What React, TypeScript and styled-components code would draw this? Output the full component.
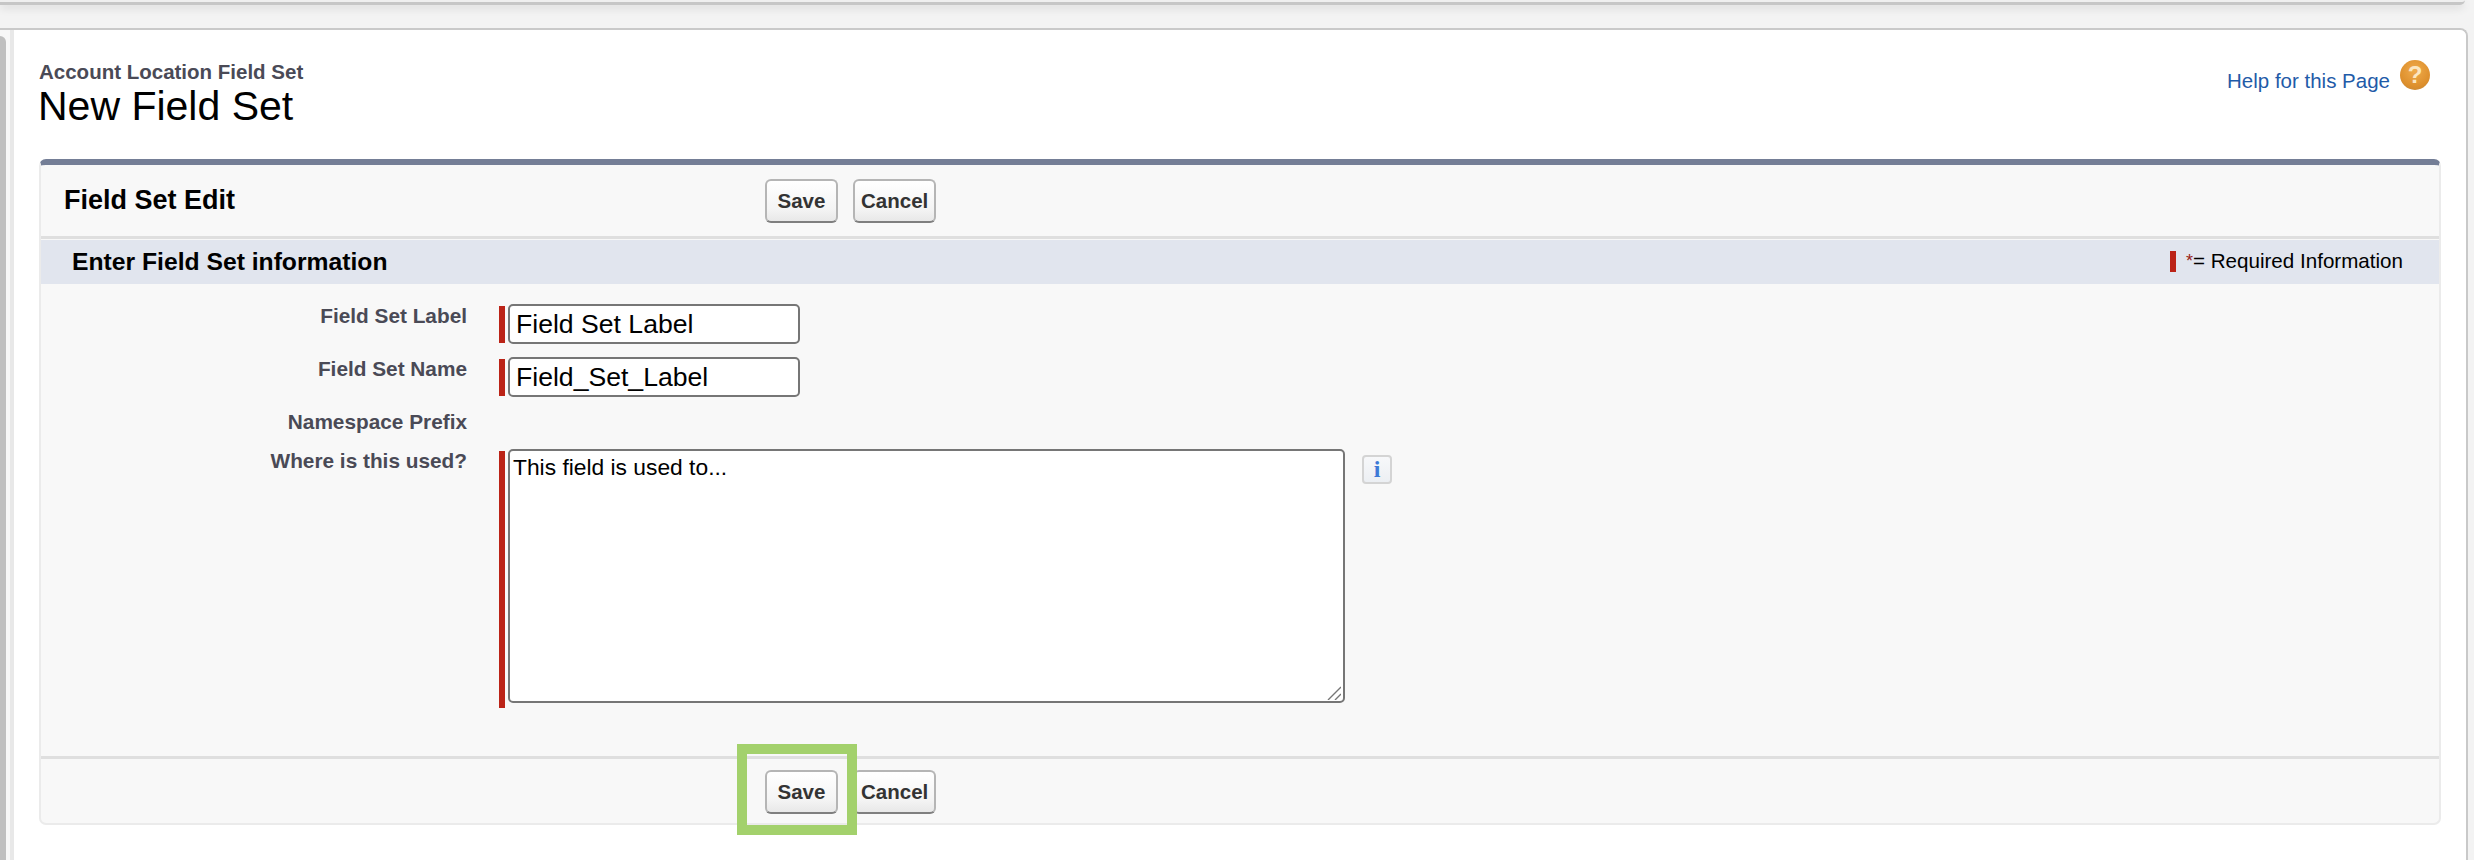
import React from 'react'
import styled, { createGlobalStyle } from 'styled-components'

const GlobalStyle = createGlobalStyle`
  html, body {
    margin: 0;
    padding: 0;
    background: #f3f3f3;
  }
  * {
    box-sizing: border-box;
  }
`

const ActionButtons = () => (
  <>
    <ActionBtn type="button">Save</ActionBtn>
    <ActionBtn type="button">Cancel</ActionBtn>
  </>
)

const App: React.FC = () => {
  return (
    <Page>
      <GlobalStyle />
      <TopBar />
      <ContentRow>
        <SideTab />
        <MainPanel>
          <PageHeader>
            <PageTitles>
              <PageType>Account Location Field Set</PageType>
              <PageName>New Field Set</PageName>
            </PageTitles>
            <HelpLink>
              <HelpText>Help for this Page</HelpText>
              <HelpIcon>?</HelpIcon>
            </HelpLink>
          </PageHeader>

          <Block>
            <BlockHeader>
              <BlockTitle>Field Set Edit</BlockTitle>
              <ActionButtons />
            </BlockHeader>

            <SectionBand>
              <SectionTitle>Enter Field Set information</SectionTitle>
              <RequiredLegend>
                <RequiredMark />
                <Star>*</Star>= Required Information
              </RequiredLegend>
            </SectionBand>

            <FormGrid>
              <FieldLabel>Field Set Label</FieldLabel>
              <FieldCell>
                <RequiredBar $height={37} />
                <TextInput type="text" defaultValue="Field Set Label" />
              </FieldCell>

              <FieldLabel>Field Set Name</FieldLabel>
              <FieldCell>
                <RequiredBar $height={37} />
                <TextInput type="text" defaultValue="Field_Set_Label" />
              </FieldCell>

              <FieldLabel>Namespace Prefix</FieldLabel>
              <EmptyCell />

              <FieldLabel>Where is this used?</FieldLabel>
              <FieldCell>
                <RequiredBar $height={257} />
                <TextareaWrap>
                  <Description defaultValue="This field is used to..." />
                  <ResizeGrip viewBox="0 0 14 14">
                    <path d="M1 14 L14 1 M8 14 L14 8" />
                  </ResizeGrip>
                </TextareaWrap>
                <InfoBtn type="button">i</InfoBtn>
              </FieldCell>
            </FormGrid>

            <BlockFooter>
              <ActionButtons />
              <Highlight />
            </BlockFooter>
          </Block>
        </MainPanel>
      </ContentRow>
    </Page>
  )
}

export default App

const Page = styled.div`
  width: 2474px;
  height: 860px;
  overflow: hidden;
  font-family: 'Liberation Sans', Arial, sans-serif;
`

const TopBar = styled.div`
  width: 2465px;
  height: 5px;
  background: #efefef;
  border-bottom: 3px solid #c6c6c6;
  border-bottom-right-radius: 6px;
  box-shadow: 0 3px 8px rgba(0, 0, 0, 0.12);
`

const ContentRow = styled.div`
  display: flex;
  width: 2468px;
  height: 832px;
  margin-top: 23px;
  background: #f7f7f7;
  border-top: 2px solid #c9c9c9;
  border-right: 2px solid #c9c9c9;
  border-top-right-radius: 8px;
`

const SideTab = styled.div`
  flex: none;
  width: 6px;
  margin-top: 6px;
  background: #bfbfbf;
  border-top-right-radius: 6px;
`

const MainPanel = styled.div`
  flex: none;
  width: 2456px;
  margin-left: 4px;
  padding: 0 25px;
  background: #ffffff;
  border-left: 4px solid #e8e8e8;
  border-top-right-radius: 6px;
`

const PageHeader = styled.div`
  display: flex;
  justify-content: space-between;
  height: 129px;
  padding-top: 30px;
`

const PageTitles = styled.div`
  display: flex;
  flex-direction: column;
`

const PageType = styled.span`
  font-size: 20.5px;
  line-height: 24px;
  font-weight: bold;
  color: #4a4a56;
`

const PageName = styled.span`
  margin-left: -1px;
  font-size: 41px;
  line-height: 44px;
  color: #000000;
`

const HelpLink = styled.div`
  display: flex;
  align-items: flex-start;
  gap: 10px;
  margin-right: 11px;
`

const HelpText = styled.span`
  margin-top: 9px;
  font-size: 20.5px;
  line-height: 24px;
  color: #1f5ba8;
`

const HelpIcon = styled.span`
  width: 30px;
  height: 30px;
  border-radius: 50%;
  background: radial-gradient(circle at 50% 35%, #f0ab4c, #dd8f2c 65%, #b8823c);
  color: #fbe6c0;
  font-size: 24px;
  line-height: 30px;
  font-weight: bold;
  text-align: center;
`

const Block = styled.div`
  position: relative;
  width: 2402px;
  height: 666px;
  background: #f8f8f8;
  border: 2px solid #ebebeb;
  border-top: 6px solid #747e96;
  border-radius: 7px;
`

const BlockHeader = styled.div`
  display: flex;
  align-items: center;
  gap: 15px;
  height: 74px;
  border-bottom: 3px solid #dfdfdf;
`

const BlockTitle = styled.h2`
  flex: none;
  width: 709px;
  margin: 0;
  padding-left: 23px;
  font-size: 27px;
  font-weight: bold;
  color: #000000;
`

const ActionBtn = styled.button`
  height: 44px;
  padding: 0 6px;
  min-width: 73px;
  font-family: inherit;
  font-size: 20.5px;
  font-weight: bold;
  color: #333333;
  background: linear-gradient(#ffffff, #f4f4f4 70%, #e8e8e8);
  border: 2px solid #b5b5b5;
  border-bottom-color: #7f7f7f;
  border-radius: 6px;
`

const SectionBand = styled.div`
  display: flex;
  align-items: center;
  justify-content: space-between;
  height: 44px;
  margin-top: 1px;
  padding: 0 36px 0 31px;
  background: #e1e5ee;
`

const SectionTitle = styled.h3`
  margin: 0;
  font-size: 24.7px;
  font-weight: bold;
  color: #000000;
`

const RequiredLegend = styled.div`
  display: flex;
  align-items: center;
  margin-top: -2px;
  font-size: 20.6px;
  color: #000000;
  white-space: pre;
`

const RequiredMark = styled.span`
  width: 6px;
  height: 21px;
  margin-right: 10px;
  background: #bb2317;
`

const Star = styled.span`
  color: #9a1f17;
  font-size: 18px;
`

const FormGrid = styled.div`
  display: grid;
  grid-template-columns: 426px 1fr;
  grid-template-rows: 40px 40px 26px auto;
  column-gap: 32px;
  row-gap: 13px;
  padding: 20px 0 48px;
`

const FieldLabel = styled.label`
  font-size: 20.8px;
  line-height: 24px;
  font-weight: bold;
  text-align: right;
  color: #4a4a56;
`

const FieldCell = styled.div`
  display: flex;
  align-items: flex-start;
`

const EmptyCell = styled.div``

const RequiredBar = styled.span<{ $height: number }>`
  flex: none;
  width: 6px;
  height: ${(p) => p.$height}px;
  margin: 2px 3px 0 0;
  background: #bb2317;
`

const TextInput = styled.input`
  width: 292px;
  height: 40px;
  padding: 0 6px;
  font-family: inherit;
  font-size: 26.6px;
  color: #000000;
  background: #ffffff;
  border: 2px solid #767676;
  border-radius: 5px;
  outline: none;
`

const TextareaWrap = styled.div`
  position: relative;
  flex: none;
  width: 837px;
  height: 254px;
`

const Description = styled.textarea`
  display: block;
  width: 100%;
  height: 100%;
  padding: 3px;
  font-family: inherit;
  font-size: 22.8px;
  color: #000000;
  background: #ffffff;
  border: 2px solid #767676;
  border-radius: 5px;
  outline: none;
  resize: none;
`

const ResizeGrip = styled.svg`
  position: absolute;
  right: 4px;
  bottom: 3px;
  width: 14px;
  height: 14px;
  fill: none;
  stroke: #767676;
  stroke-width: 1.4;
`

const InfoBtn = styled.button`
  flex: none;
  width: 30px;
  height: 29px;
  margin: 6px 0 0 17px;
  padding: 0;
  font-family: 'Liberation Serif', serif;
  font-size: 24px;
  font-weight: bold;
  line-height: 25px;
  color: #3d79d6;
  background: linear-gradient(#f7f8fa, #eceff3);
  border: 2px solid #d4d4d4;
  border-radius: 4px;
`

const BlockFooter = styled.div`
  display: flex;
  align-items: flex-start;
  gap: 15px;
  height: 69px;
  padding: 11px 0 0 724px;
  border-top: 3px solid #dfdfdf;
`

const Highlight = styled.div`
  position: absolute;
  left: 696px;
  bottom: -12px;
  width: 120px;
  height: 91px;
  border: 10px solid #a3d16c;
  pointer-events: none;
`
